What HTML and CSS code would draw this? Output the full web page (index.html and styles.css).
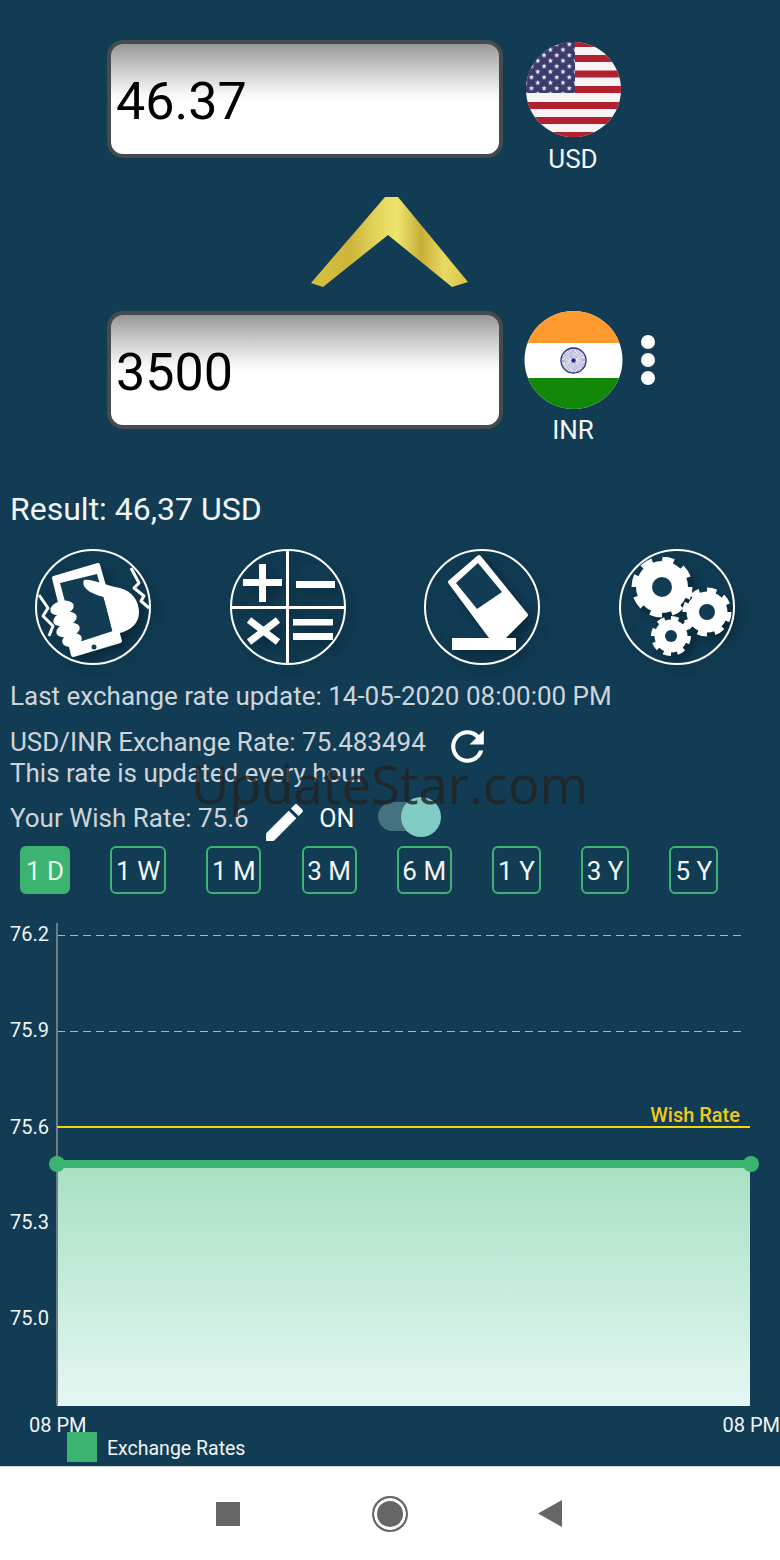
FILE: index.html
```html
<!DOCTYPE html>
<html lang="en">
<head>
<meta charset="utf-8">
<title>Currency Converter</title>
<link rel="stylesheet" href="styles.css">
</head>
<body>
<div class="screen">
  <main class="app">
    <section class="converter-row converter-row-top">
      <div class="amount-box">46.37</div>
      <div class="currency">
        <svg class="flag flag-usd" viewBox="0 0 95 95">
          <defs>
            <clipPath id="usClip"><circle cx="47.5" cy="47.5" r="47.5"/></clipPath>
            <polygon id="star" points="0,-2.8 .65,-.9 2.7,-.9 1,.35 1.65,2.3 0,1.15 -1.65,2.3 -1,.35 -2.7,-.9 -.65,-.9"/>
            <pattern id="stars" x="2.5" y="-.7" width="12.6" height="11" patternUnits="userSpaceOnUse">
              <use href="#star" x="3" y="3" class="us-star"/>
              <use href="#star" x="9.3" y="8.5" class="us-star"/>
            </pattern>
          </defs>
          <g clip-path="url(#usClip)">
            <rect class="us-white" width="95" height="95"/>
            <rect class="us-red" y="-2" width="95" height="7"/>
            <rect class="us-red" y="13" width="95" height="7"/>
            <rect class="us-red" y="28.5" width="95" height="7"/>
            <rect class="us-red" y="44" width="95" height="7"/>
            <rect class="us-red" y="60" width="95" height="7"/>
            <rect class="us-red" y="75" width="95" height="7"/>
            <rect class="us-red" y="90" width="95" height="7"/>
            <rect class="us-blue" width="49" height="51"/>
            <rect fill="url(#stars)" width="49" height="51"/>
          </g>
        </svg>
        <span class="code">USD</span>
      </div>
    </section>

    <svg class="chevron" viewBox="0 0 160 92">
      <defs>
        <linearGradient id="gold" x1="0" y1="0" x2="1" y2="0">
          <stop offset="0" stop-color="#d8c23a"/>
          <stop offset=".25" stop-color="#cdb53a"/>
          <stop offset=".42" stop-color="#e3d55c"/>
          <stop offset=".55" stop-color="#efe56e"/>
          <stop offset=".7" stop-color="#c8ae38"/>
          <stop offset=".85" stop-color="#e8da62"/>
          <stop offset="1" stop-color="#d9c445"/>
        </linearGradient>
      </defs>
      <polygon fill="url(#gold)" points="75,1 88,1 158,86 142,91 78,39 13,91 1,87"/>
    </svg>

    <section class="converter-row">
      <div class="amount-box">3500</div>
      <div class="currency">
        <svg class="flag flag-inr" viewBox="0 0 99 98">
          <defs>
            <clipPath id="inClip"><circle cx="49.5" cy="49" r="49"/></clipPath>
          </defs>
          <g clip-path="url(#inClip)">
            <rect class="in-white" width="99" height="98"/>
            <rect class="in-orange" width="99" height="32"/>
            <rect class="in-green" y="67" width="99" height="31"/>
          </g>
          <circle class="chakra-ring" cx="49.5" cy="49.5" r="12.5"/>
          <circle class="chakra-spokes" cx="49.5" cy="49.5" r="7" pathLength="48"/>
          <circle class="chakra-hub" cx="49.5" cy="49.5" r="2.2"/>
        </svg>
        <span class="code">INR</span>
      </div>
      <div class="more-menu"><i></i><i></i><i></i></div>
    </section>

    <p class="result">Result: 46,37 USD</p>

    <nav class="tools">
      <svg class="tool" viewBox="0 0 116 116">
        <circle class="tool-ring" cx="58" cy="58" r="57"/>
        <polygon class="solid round" points="19,29 63,16 85,92 38,106"/>
        <polygon class="hole" points="25,34 62,25 78,82 41,94"/>
        <circle class="hole" cx="59" cy="98" r="2.5"/>
        <path class="solid" d="M49 31C55 29 70 36 85 39C97 42 104 52 104 63C104 76 93 84 78 85L69 48C60 46 45 40 49 31Z"/>
        <ellipse class="solid" cx="27" cy="59" rx="12" ry="7" transform="rotate(-14 27 59)"/>
        <ellipse class="solid" cx="30" cy="70" rx="12" ry="7" transform="rotate(-14 30 70)"/>
        <ellipse class="solid" cx="33" cy="81" rx="12" ry="7" transform="rotate(-14 33 81)"/>
        <ellipse class="solid" cx="37" cy="91" rx="10" ry="6.5" transform="rotate(-14 37 91)"/>
        <polyline class="zig" points="4,46 13,59 8,67 18,77 14,87"/>
        <polyline class="zig" points="96,19 104,34 99,39 109,47 106,52 114,59"/>
      </svg>
      <svg class="tool" viewBox="0 0 116 116">
        <circle class="tool-ring" cx="58" cy="58" r="57"/>
        <rect class="solid" x="56" y="1" width="3" height="114"/>
        <rect class="solid" x="1" y="57" width="114" height="3"/>
        <rect class="solid" x="13" y="30" width="39" height="7"/>
        <rect class="solid" x="29" y="15" width="7" height="38"/>
        <rect class="solid" x="66" y="32" width="39" height="7"/>
        <line class="times" x1="19" y1="71" x2="48" y2="93"/>
        <line class="times" x1="48" y1="71" x2="19" y2="93"/>
        <rect class="solid" x="63" y="70" width="40" height="6.5"/>
        <rect class="solid" x="63" y="84" width="40" height="7"/>
      </svg>
      <svg class="tool" viewBox="0 0 116 116">
        <circle class="tool-ring" cx="58" cy="58" r="57"/>
        <polygon class="solid round" points="55,8 26,33 66,87 81,87 102,66"/>
        <polygon class="hole" points="32,34 54,14 78,43 53,60"/>
        <rect class="solid" x="28" y="89" width="64" height="12"/>
      </svg>
      <svg class="tool" viewBox="0 0 116 116">
        <circle class="tool-ring" cx="58" cy="58" r="57"/>
        <circle class="solid" cx="43" cy="38" r="26"/>
        <circle class="teeth teeth-big" cx="43" cy="38" r="27" pathLength="16"/>
        <circle class="hole" cx="43" cy="38" r="10"/>
        <circle class="solid" cx="88" cy="63" r="20.5"/>
        <circle class="teeth teeth-mid" cx="88" cy="63" r="21.5" pathLength="16"/>
        <circle class="hole" cx="88" cy="63" r="8"/>
        <circle class="solid" cx="52" cy="87" r="16.5"/>
        <circle class="teeth teeth-small" cx="52" cy="87" r="17.5" pathLength="16"/>
        <circle class="hole" cx="52" cy="87" r="6"/>
      </svg>
    </nav>

    <p class="info info-update">Last exchange rate update: 14-05-2020 08:00:00 PM</p>

    <div class="rate-block">
      <div class="rate-line">
        <span class="info">USD/INR Exchange Rate: 75.483494</span>
        <svg class="refresh" viewBox="0 0 24 24"><path d="M17.65 6.35C16.2 4.9 14.21 4 12 4c-4.42 0-7.99 3.58-7.99 8s3.57 8 7.99 8c3.73 0 6.84-2.55 7.73-6h-2.08c-.82 2.33-3.04 4-5.65 4-3.31 0-6-2.69-6-6s2.69-6 6-6c1.66 0 3.14.69 4.22 1.78L13 11h7V4l-2.35 2.35z"/></svg>
      </div>
      <p class="info">This rate is updated every hour</p>
    </div>

    <div class="wish-row">
      <span class="info">Your Wish Rate: 75.6</span>
      <svg class="pencil" viewBox="0 0 24 24"><path d="M3 17.25V21h3.75L17.81 9.94l-3.75-3.75L3 17.25zM20.71 7.04c.39-.39.39-1.02 0-1.41l-2.34-2.34c-.39-.39-1.02-.39-1.41 0l-1.83 1.83 3.75 3.75 1.83-1.83z"/></svg>
      <span class="on-label">ON</span>
      <div class="switch"><span class="switch-thumb"></span></div>
    </div>

    <div class="ranges">
      <span class="range range-active">1 D</span>
      <span class="range">1 W</span>
      <span class="range">1 M</span>
      <span class="range">3 M</span>
      <span class="range">6 M</span>
      <span class="range">1 Y</span>
      <span class="range">3 Y</span>
      <span class="range">5 Y</span>
    </div>

    <svg class="chart" viewBox="0 894 780 572">
      <defs>
        <linearGradient id="area" x1="0" y1="0" x2="0" y2="1">
          <stop offset="0" stop-color="#a8e0c3"/>
          <stop offset="1" stop-color="#e4f7f3"/>
        </linearGradient>
      </defs>
      <line class="grid" x1="57" y1="935.5" x2="745" y2="935.5"/>
      <line class="grid" x1="57" y1="1031.5" x2="745" y2="1031.5"/>
      <rect x="57" y="1166" width="693" height="240" fill="url(#area)"/>
      <line class="axis" x1="57" y1="923" x2="57" y2="1405"/>
      <line class="wish-line" x1="57" y1="1127" x2="750" y2="1127"/>
      <line class="rate-line-chart" x1="57" y1="1164" x2="751" y2="1164"/>
      <circle class="rate-dot" cx="57" cy="1164" r="8"/>
      <circle class="rate-dot" cx="751" cy="1164" r="8"/>
      <text class="chart-label" x="10" y="941">76.2</text>
      <text class="chart-label" x="10" y="1037">75.9</text>
      <text class="chart-label" x="10" y="1134">75.6</text>
      <text class="chart-label" x="10" y="1229">75.3</text>
      <text class="chart-label" x="10" y="1325">75.0</text>
      <text class="wish-label" x="740" y="1122">Wish Rate</text>
      <text class="chart-label" x="29" y="1432">08 PM</text>
      <text class="chart-label" x="722.5" y="1432">08 PM</text>
      <rect class="legend-swatch" x="67" y="1432" width="30" height="30"/>
      <text class="chart-label legend-label" x="107" y="1455">Exchange Rates</text>
    </svg>

    <div class="watermark">UpdateStar.com</div>
  </main>

  <footer class="navbar">
    <span class="nav-square"></span>
    <span class="nav-circle"></span>
    <svg class="nav-back" viewBox="0 0 24 27"><polygon points="24,0 24,27 0,13.5"/></svg>
  </footer>
</div>
</body>
</html>
```

FILE: styles.css
```css
* { box-sizing: border-box; }

html, body {
  margin: 0;
  padding: 0;
}

body {
  width: 780px;
  height: 1560px;
  overflow: hidden;
  font-family: Roboto, "Liberation Sans", sans-serif;
}

p { margin: 0; }

.screen {
  width: 780px;
  height: 1560px;
  display: flex;
  flex-direction: column;
}

.app {
  position: relative;
  height: 1466px;
  padding-top: 40px;
  background: #113c53;
  color: #fff;
}

/* Converter */
.converter-row {
  display: flex;
  align-items: flex-start;
  padding-left: 107px;
}

.converter-row-top .currency { padding-top: 2px; }
.converter-row-top .code { margin-top: 8px; }

.amount-box {
  width: 396px;
  height: 118px;
  display: flex;
  align-items: center;
  padding: 5px 0 0 5px;
  border: 4px solid #454a4e;
  border-radius: 16px;
  background: linear-gradient(#979797 0%, #c9c9c9 22%, #f4f4f4 44%, #fff 52%, #fff 100%);
  color: #000;
  font-size: 52px;
  line-height: 1;
}

.currency {
  width: 100px;
  margin-left: 20px;
  display: flex;
  flex-direction: column;
  align-items: center;
}

.flag { display: block; }
.flag-usd { width: 95px; height: 95px; }
.flag-inr { width: 99px; height: 98px; }

.code {
  margin-top: 7px;
  font-size: 26px;
  line-height: 28px;
  color: #f4f6f8;
}

.us-white { fill: #f6f4f4; }
.us-red { fill: #b3202f; }
.us-blue { fill: #3c3b6e; }
.us-star { fill: #fff; }

.in-white { fill: #fff; }
.in-orange { fill: #ff9a2e; }
.in-green { fill: #138808; }
.chakra-ring { fill: #fff; stroke: #1c2a80; stroke-width: 1.3; }
.chakra-spokes { fill: none; stroke: #4a50a0; stroke-width: 10; stroke-dasharray: .3 .7; }
.chakra-hub { fill: #1c2a80; }

.more-menu {
  display: flex;
  flex-direction: column;
  gap: 4px;
  margin: 24px 0 0 18px;
}

.more-menu i {
  display: block;
  width: 14px;
  height: 14px;
  border-radius: 50%;
  background: #fff;
}

.chevron {
  display: block;
  width: 160px;
  height: 92px;
  margin: 23px 0 23px 310px;
}

/* Result + tools */
.result {
  margin: 48px 0 0 10px;
  font-size: 32px;
  line-height: 34px;
  color: #f2f5f7;
}

.tools {
  display: flex;
  gap: 78.5px;
  margin-top: 23px;
  padding-left: 35px;
}

.tool {
  display: block;
  width: 116px;
  height: 116px;
  filter: drop-shadow(6px 6px 6px rgba(4, 22, 36, .55));
}

.tool-ring { fill: none; stroke: #fff; stroke-width: 2; }
.solid { fill: #fff; }
.round { stroke: #fff; stroke-width: 4; stroke-linejoin: round; }
.hole { fill: #113c53; }
.zig { fill: none; stroke: #fff; stroke-width: 3; stroke-linejoin: round; }
.times { stroke: #fff; stroke-width: 7; }
.teeth { fill: none; stroke: #fff; stroke-dasharray: 1.1 .9; }
.teeth-big { stroke-width: 7; }
.teeth-mid { stroke-width: 6; }
.teeth-small { stroke-width: 5; }

/* Info text */
.info {
  font-size: 26px;
  line-height: 31px;
  color: #cfd4db;
  white-space: nowrap;
}

.info-update { margin: 16px 0 0 10px; }

.rate-block {
  margin: 15px 0 0 10px;
}

.rate-line {
  display: flex;
  align-items: center;
  height: 31px;
}

.refresh {
  width: 49px;
  height: 49px;
  margin: 8px 0 0 17px;
  flex: none;
  fill: #fff;
}

.wish-row {
  display: flex;
  align-items: center;
  height: 48px;
  margin-top: 5px;
  padding-left: 10px;
}

.pencil {
  width: 49px;
  height: 49px;
  margin: 9px 0 0 11.5px;
  flex: none;
  fill: #fff;
}

.on-label {
  margin-left: 10px;
  font-size: 25px;
  color: #fff;
}

.switch {
  position: relative;
  width: 52px;
  height: 29px;
  margin: -3px 0 0 24px;
  border-radius: 15px;
  background: #44727f;
}

.switch-thumb {
  position: absolute;
  top: -5px;
  right: -11px;
  width: 40px;
  height: 40px;
  border-radius: 50%;
  background: #80cbc4;
}

/* Range buttons */
.ranges {
  display: grid;
  grid-template-columns: 50px 56px 55px 55px 55px 49px 48px 49px;
  column-gap: 40.2px;
  margin-top: 4px;
  padding-left: 20px;
}

.range {
  height: 48px;
  display: flex;
  align-items: center;
  justify-content: center;
  padding-top: 2px;
  border: 2px solid #3cb371;
  border-radius: 6px;
  font-size: 26px;
  color: #f2f6f8;
  white-space: nowrap;
}

.range-active {
  background: #3cb371;
  color: #dff5e9;
}

/* Chart */
.chart {
  display: block;
  width: 780px;
  height: 572px;
}

.grid { stroke: #aab5bb; stroke-width: 1; stroke-dasharray: 8 5; }
.axis { stroke: #6c7d88; stroke-width: 2; }
.wish-line { stroke: #f2d808; stroke-width: 2; }
.rate-line-chart { stroke: #3cb371; stroke-width: 8; }
.rate-dot { fill: #3cb371; }
.legend-swatch { fill: #3cb371; }

.chart-label {
  font-size: 20px;
  fill: #f2f5f7;
}

.legend-label { font-size: 19.5px; }

.wish-label {
  font-size: 20px;
  font-weight: 500;
  fill: #f2c81e;
  text-anchor: end;
}

.watermark {
  position: absolute;
  left: 191px;
  top: 750px;
  font-family: "Open Sans", sans-serif;
  font-size: 52.5px;
  line-height: 68px;
  color: rgba(34, 34, 34, .82);
  white-space: nowrap;
}

/* Navigation bar */
.navbar {
  flex: 1;
  display: flex;
  align-items: center;
  padding-left: 216px;
  background: #fff;
  border-top: 1px solid #c9ced2;
}

.nav-square {
  width: 24px;
  height: 24px;
  background: #666;
}

.nav-circle {
  width: 36px;
  height: 36px;
  margin-left: 132px;
  border: 2px solid #666;
  border-radius: 50%;
  background: #666;
  box-shadow: inset 0 0 0 3px #fff;
}

.nav-back {
  width: 24px;
  height: 27px;
  margin-left: 130px;
  fill: #666;
}
```
